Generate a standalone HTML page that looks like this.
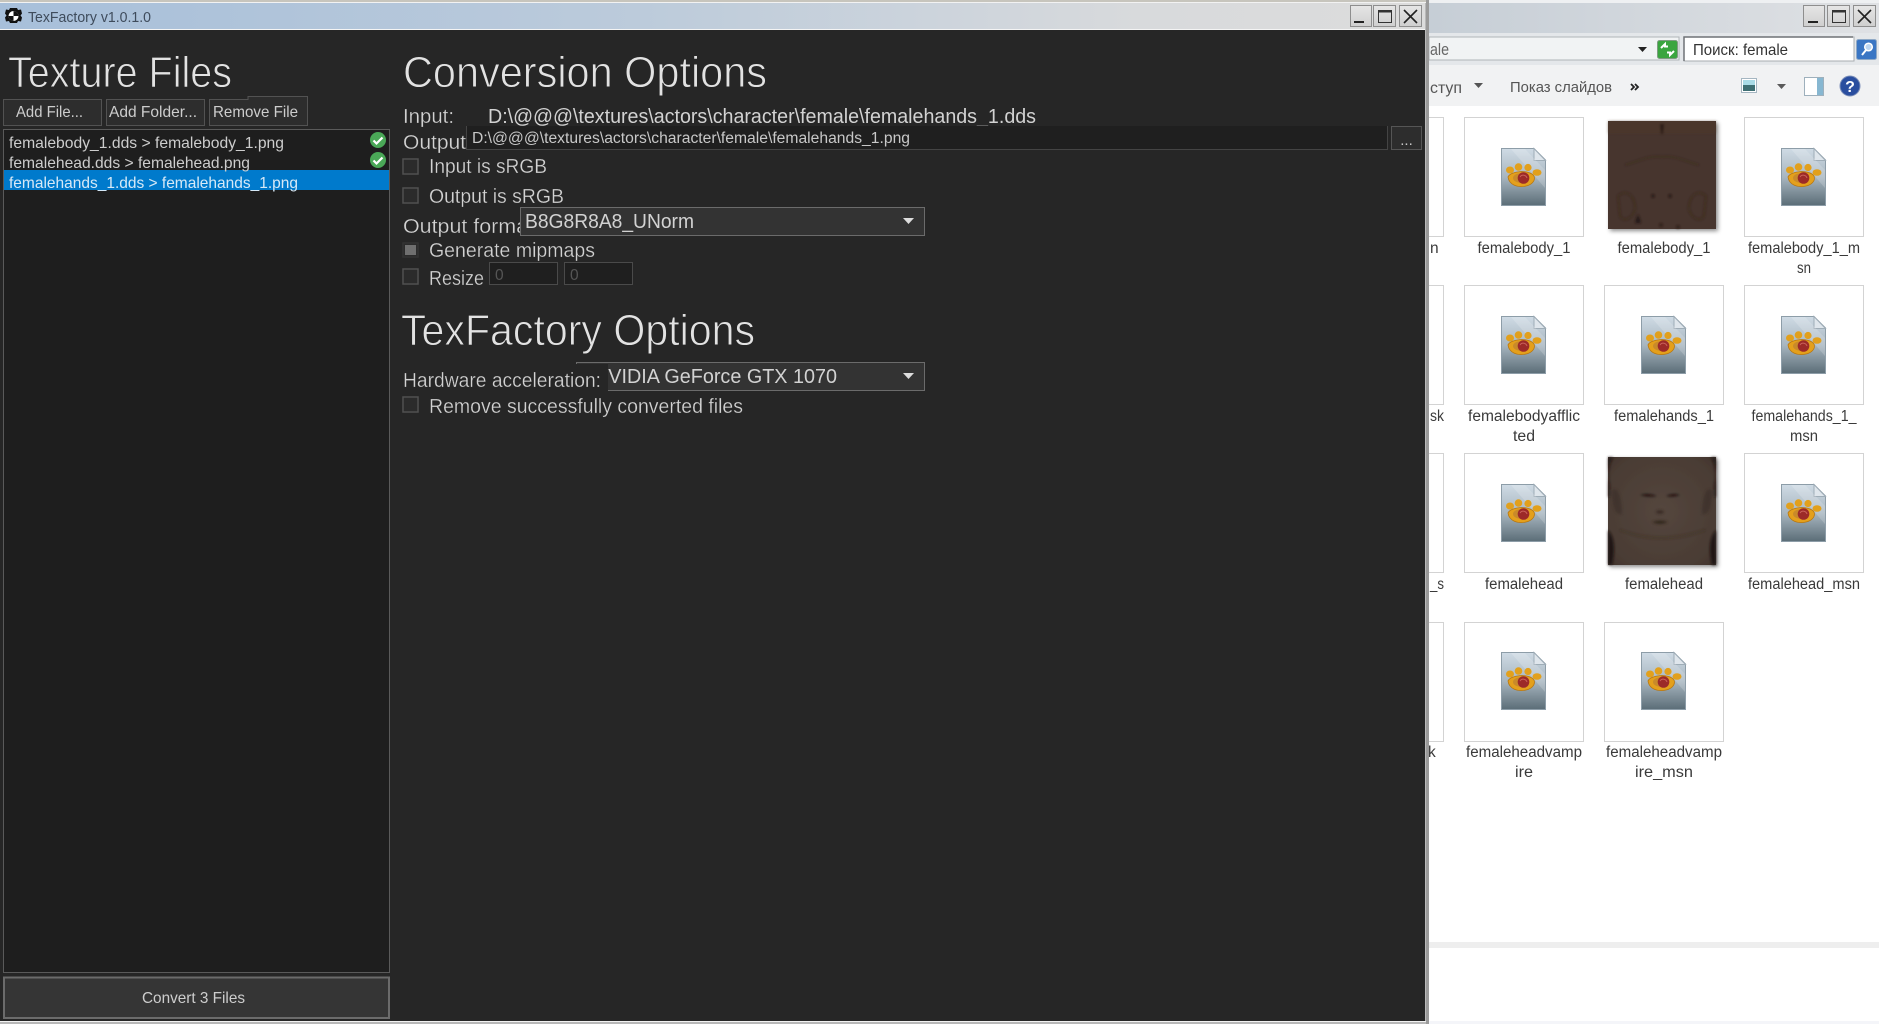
<!DOCTYPE html>
<html><head><meta charset="utf-8"><title>TexFactory</title>
<style>
html,body{margin:0;padding:0;background:#fff;overflow:hidden}
svg{display:block}
text{font-family:"Liberation Sans",sans-serif}
.h{fill:#e2e2e2;font-size:44px;stroke:#262626;stroke-width:.9px}
.m{fill:#d2d2d2;font-size:20px;stroke:#262626;stroke-width:.25px}
.s{fill:#cdcdcd;font-size:16px}
.l{fill:#3a3a3a;font-size:15.5px;text-anchor:middle}
.t{fill:none;stroke:#d3d3d3;stroke-width:1}
.cb{fill:#2b2b2b;stroke:#505050;stroke-width:1.5}
</style></head><body>
<svg xmlns="http://www.w3.org/2000/svg" width="1879" height="1024" viewBox="0 0 1879 1024">
<defs>
<linearGradient id="tb" x1="0" x2="1" y1="0" y2="0"><stop offset="0" stop-color="#a7bfda"/><stop offset=".45" stop-color="#bccbdb"/><stop offset=".8" stop-color="#d8dadc"/><stop offset="1" stop-color="#dcdcdc"/></linearGradient>
<linearGradient id="et" x1="0" x2="1" y1="0" y2="0"><stop offset="0" stop-color="#c6ced6"/><stop offset="1" stop-color="#dfe1e4"/></linearGradient>
<linearGradient id="doc" x1="0" x2="0" y1="0" y2="1"><stop offset="0" stop-color="#cfdbe5"/><stop offset=".5" stop-color="#a8b6c0"/><stop offset="1" stop-color="#5b6d77"/></linearGradient>
<linearGradient id="btn" x1="0" x2="0" y1="0" y2="1"><stop offset="0" stop-color="#e6e6e6"/><stop offset="1" stop-color="#cfcfcf"/></linearGradient>
<radialGradient id="face" cx=".5" cy=".5" r=".75"><stop offset="0" stop-color="#54463d"/><stop offset=".75" stop-color="#4a3c34"/><stop offset="1" stop-color="#3d3029"/></radialGradient>
<filter id="b1" x="-20%" y="-20%" width="140%" height="140%"><feGaussianBlur stdDeviation="1.2"/></filter>
<filter id="sh" x="-10%" y="-10%" width="125%" height="125%"><feDropShadow dx="2" dy="2" stdDeviation="2" flood-color="#000" flood-opacity=".45"/></filter>
<symbol id="fi" viewBox="0 0 45 58" overflow="visible">
<path d="M0.5 0.5H33L44.5 12V57.5H0.5Z" fill="url(#doc)" stroke="#8d9da8"/>
<path d="M33 .5V12.5H44.5Z" fill="#dfe6ec" stroke="#9fadb7"/>
<path d="M10 1L44 40V22L24 1Z" fill="#fff" opacity=".18"/>
<ellipse cx="9" cy="22" rx="4" ry="3.500" fill="#e2a01c"/>
<circle cx="17.500" cy="19" r="3.800" fill="#e2a01c"/>
<circle cx="27" cy="19.500" r="3.600" fill="#e2a01c"/>
<ellipse cx="36" cy="24.500" rx="4.500" ry="3.300" fill="#e2a01c"/>
<path d="M7 29C9 23 28 21 33 28C35 33 30 37 25 38C17 40 8 37 7 29Z" fill="#e4a01c" stroke="#b9770f" stroke-width=".8"/>
<ellipse cx="20" cy="30" rx="8" ry="4.800" fill="#c98a2a"/>
<circle cx="22.500" cy="30" r="5.800" fill="#9c2a28"/>
<path d="M19 29c2-3 6-2 7 1" fill="none" stroke="#c9605a" stroke-width="1"/>
</symbol>
</defs>

<!-- explorer window behind -->
<rect x="1425" y="0" width="454" height="1024" fill="#fff"/>
<rect x="1429" y="0" width="450" height="3" fill="#eef0f2"/>
<rect x="1429" y="3" width="450" height="30" fill="url(#et)"/>
<rect x="1429" y="33" width="450" height="32" fill="#e4e7ea"/>
<rect x="1429" y="37" width="250" height="23" fill="#f1f3f4" stroke="#b0b4b8"/>
<text x="1430" y="55" font-size="17" fill="#666" textLength="19" lengthAdjust="spacingAndGlyphs">ale</text>
<path d="M1638 47h9l-4.500 5z" fill="#222"/>
<rect x="1657.500" y="40.500" width="20" height="18" rx="2" fill="#3aa53f" stroke="#7f9c82"/>
<path d="M1661 48l4-4v2.500h3M1674 51l-4 4v-2.500h-3" stroke="#fff" stroke-width="2" fill="none"/>
<rect x="1684" y="37" width="170" height="24" fill="#fff" stroke="#a8acb0"/>
<path d="M1684 61V37H1853" fill="none" stroke="#6e7276" stroke-width="1.500"/>
<text x="1693" y="55" font-size="16" fill="#333" textLength="95" lengthAdjust="spacingAndGlyphs">Поиск: female</text>
<rect x="1856.500" y="39.500" width="20" height="20" rx="2" fill="#3a76c4" stroke="#8fa9c6"/>
<circle cx="1868.500" cy="47" r="3.800" fill="#bcd6f2" stroke="#fff" stroke-width="1.500"/>
<path d="M1866 50l-4 5" stroke="#fff" stroke-width="2"/>
<rect x="1429" y="65" width="450" height="41" fill="#f1f2f3"/>
<text x="1430" y="93" font-size="15.500" fill="#555" textLength="32" lengthAdjust="spacingAndGlyphs">ступ</text>
<path d="M1474 83h9l-4.500 5z" fill="#555"/>
<text x="1510" y="92" font-size="15" fill="#555" textLength="102" lengthAdjust="spacingAndGlyphs">Показ слайдов</text>
<path d="M1631 90l3-3-3-3M1635 90l3-3-3-3" stroke="#222" stroke-width="1.800" fill="none"/>
<rect x="1741.500" y="78.500" width="15" height="14" fill="#fff" stroke="#a5b6c1"/>
<rect x="1743" y="80" width="12" height="5" fill="#a9dbe6"/>
<rect x="1743" y="85" width="12" height="6" fill="#3e6f73"/>
<path d="M1777 84h9l-4.500 5z" fill="#5a5a5a"/>
<rect x="1804.500" y="77.500" width="19" height="18" fill="#fff" stroke="#9eb0bc"/>
<rect x="1817" y="78" width="6" height="17" fill="#87b7d1"/>
<circle cx="1850" cy="86" r="10" fill="#2a4e9f" stroke="#7c8fb9"/>
<text x="1850" y="92" font-size="16" font-weight="bold" fill="#fff" text-anchor="middle">?</text>

<g id="tiles">
<rect class="t" x="1420.500" y="117.500" width="23" height="119"/>
<rect class="t" x="1420.500" y="285.500" width="23" height="119"/>
<rect class="t" x="1420.500" y="453.500" width="23" height="119"/>
<rect class="t" x="1420.500" y="622.500" width="23" height="119"/>
<text x="1430" y="253" font-size="15.500" fill="#3a3a3a">n</text>
<text x="1430" y="421" font-size="15.500" fill="#3a3a3a" textLength="14" lengthAdjust="spacingAndGlyphs">sk</text>
<text x="1430" y="589" font-size="15.500" fill="#3a3a3a" textLength="14" lengthAdjust="spacingAndGlyphs">_s</text>
<text x="1428" y="757" font-size="15.500" fill="#3a3a3a">k</text>

<!-- row 1 -->
<rect class="t" x="1464.500" y="117.500" width="119" height="119"/>
<use href="#fi" x="1501" y="148" width="45" height="58"/>
<text class="l" x="1524" y="253" textLength="93" lengthAdjust="spacingAndGlyphs">femalebody_1</text>
<rect x="1608" y="121" width="108" height="108" fill="#47352d" filter="url(#sh)"/>
<g filter="url(#b1)">
<rect x="1608" y="121" width="108" height="12" fill="#4e3529" opacity=".4"/>
<path d="M1660 124h4l-1 10h-2z" fill="#2a1c16"/>
<path d="M1625 165c15-4 24-10 37-8 13-2 22 4 37 8" stroke="#33241d" stroke-width="1.500" fill="none" opacity=".4"/>
<path d="M1618 196c8-8 18 0 17 14-4 10-12 12-15 6z" fill="none" stroke="#2f221c" stroke-width="1.500" opacity=".5"/>
<path d="M1706 196c-8-8-18 0-17 14 4 10 12 12 15 6z" fill="none" stroke="#2f221c" stroke-width="1.500" opacity=".5"/>
<circle cx="1653" cy="196" r="1.500" fill="#1d1310"/><circle cx="1670" cy="196" r="1.500" fill="#1d1310"/>
<path d="M1638 214l3 9h-6z" fill="#241812"/>
<circle cx="1661" cy="225" r="1.500" fill="#241812"/><circle cx="1678" cy="227" r="1.500" fill="#241812"/>
</g>
<rect class="t" x="1744.500" y="117.500" width="119" height="119"/>
<use href="#fi" x="1781" y="148" width="45" height="58"/>
<text class="l" x="1804" y="253" textLength="112" lengthAdjust="spacingAndGlyphs">femalebody_1_m</text>
<text class="l" x="1804" y="273" textLength="14" lengthAdjust="spacingAndGlyphs">sn</text>
<text class="l" x="1664" y="253" textLength="93" lengthAdjust="spacingAndGlyphs">femalebody_1</text>

<!-- row 2 -->
<rect class="t" x="1464.500" y="285.500" width="119" height="119"/>
<use href="#fi" x="1501" y="316" width="45" height="58"/>
<text class="l" x="1524" y="421" textLength="112" lengthAdjust="spacingAndGlyphs">femalebodyafflic</text>
<text class="l" x="1524" y="441" textLength="22" lengthAdjust="spacingAndGlyphs">ted</text>
<rect class="t" x="1604.500" y="285.500" width="119" height="119"/>
<use href="#fi" x="1641" y="316" width="45" height="58"/>
<text class="l" x="1664" y="421" textLength="100" lengthAdjust="spacingAndGlyphs">femalehands_1</text>
<rect class="t" x="1744.500" y="285.500" width="119" height="119"/>
<use href="#fi" x="1781" y="316" width="45" height="58"/>
<text class="l" x="1804" y="421" textLength="105" lengthAdjust="spacingAndGlyphs">femalehands_1_</text>
<text class="l" x="1804" y="441" textLength="28" lengthAdjust="spacingAndGlyphs">msn</text>

<!-- row 3 -->
<rect class="t" x="1464.500" y="453.500" width="119" height="119"/>
<use href="#fi" x="1501" y="484" width="45" height="58"/>
<text class="l" x="1524" y="589" textLength="78" lengthAdjust="spacingAndGlyphs">femalehead</text>
<rect x="1608" y="457" width="108" height="108" fill="url(#face)" filter="url(#sh)"/>
<g filter="url(#b1)">
<path d="M1608 457h5c-5 10-5 20-3 28v12h-2z" fill="#1f1612" opacity=".7"/>
<path d="M1716 457h-5c5 10 5 20 3 28v12h2z" fill="#1f1612" opacity=".7"/>
<path d="M1608 530c6 6 8 18 4 35h-4z" fill="#1a120e" opacity=".85"/>
<path d="M1716 530c-6 6-8 18-4 35h4z" fill="#1a120e" opacity=".85"/>
<path d="M1612 490c6-4 10 8 10 24-6 2-10-6-10-24z" fill="#3a2d26" opacity=".7"/>
<path d="M1712 490c-6-4-10 8-10 24 6 2 10-6 10-24z" fill="#3a2d26" opacity=".7"/>
<path d="M1640 495q8-2 17 1q-9 1-17-1z" fill="#120c0a"/>
<path d="M1680 495q-7-2-14 1q7 1 14-1z" fill="#120c0a"/>
<ellipse cx="1660" cy="512" rx="4" ry="2" fill="#33261f" opacity=".8"/>
<path d="M1652 522q8-3 16 0q-8 4-16 0z" fill="#33251e"/>
<path d="M1620 530q40 16 85 0" stroke="#33261f" stroke-width="2" fill="none" opacity=".35"/>
</g>
<text class="l" x="1664" y="589" textLength="78" lengthAdjust="spacingAndGlyphs">femalehead</text>
<rect class="t" x="1744.500" y="453.500" width="119" height="119"/>
<use href="#fi" x="1781" y="484" width="45" height="58"/>
<text class="l" x="1804" y="589" textLength="112" lengthAdjust="spacingAndGlyphs">femalehead_msn</text>

<!-- row 4 -->
<rect class="t" x="1464.500" y="622.500" width="119" height="119"/>
<use href="#fi" x="1501" y="652" width="45" height="58"/>
<text class="l" x="1524" y="757" textLength="116" lengthAdjust="spacingAndGlyphs">femaleheadvamp</text>
<text class="l" x="1524" y="777" textLength="18" lengthAdjust="spacingAndGlyphs">ire</text>
<rect class="t" x="1604.500" y="622.500" width="119" height="119"/>
<use href="#fi" x="1641" y="652" width="45" height="58"/>
<text class="l" x="1664" y="757" textLength="116" lengthAdjust="spacingAndGlyphs">femaleheadvamp</text>
<text class="l" x="1664" y="777" textLength="58" lengthAdjust="spacingAndGlyphs">ire_msn</text>
</g>

<rect x="1429" y="942" width="450" height="6" fill="#eeeeee"/>
<rect x="1429" y="1021" width="450" height="3" fill="#f4f5f9"/>

<!-- explorer caption buttons -->
<g stroke="#8e8e8e" fill="url(#btn)">
<rect x="1803.500" y="5.500" width="21" height="21"/>
<rect x="1827.500" y="5.500" width="22" height="21"/>
<rect x="1853.500" y="5.500" width="22" height="21"/>
</g>
<path d="M1808 22h10" stroke="#222" stroke-width="2"/>
<rect x="1832.500" y="10.500" width="13" height="12" fill="none" stroke="#333"/><path d="M1832 11.500h14" stroke="#333" stroke-width="2"/>
<path d="M1858 10l13 13M1871 10l-13 13" stroke="#222" stroke-width="1.600"/>

<!-- main window -->
<rect x="0" y="0" width="1429" height="1024" fill="#b9b9b9"/>
<rect x="0" y="0" width="1426" height="2" fill="#c7c5bd"/>
<rect x="0" y="2" width="1426" height="1" fill="#f2f2f2"/>
<rect x="1426" y="0" width="3" height="1024" fill="#9a9a9a"/>
<rect x="0" y="3" width="1425" height="26" fill="url(#tb)"/>
<rect x="0" y="29" width="1425" height="1" fill="#f4f4f4"/>
<rect x="0" y="30" width="1425" height="991" fill="#262626"/>
<rect x="0" y="1021" width="1426" height="1" fill="#f2f2f2"/>
<rect x="0" y="1022" width="1426" height="2" fill="#b8b8b8"/>

<!-- app icon -->
<path d="M10 8h7l1 2 3-.500 1 4-1.500 2 1.500 2-1 4-3-.500-1 2h-7l-1-2-3 .500-1-4 1.500-2-1.500-2 1-4 3 .500z" fill="#111"/>
<circle cx="13.500" cy="16" r="5" fill="#fff"/>
<path d="M13.500 11a5 5 0 0 1 5 5h-5zM13.500 21a5 5 0 0 1-5-5h5z" fill="#111"/>
<text x="28" y="22" font-size="14.500" fill="#3f4c5c" textLength="123" lengthAdjust="spacingAndGlyphs">TexFactory v1.0.1.0</text>

<!-- caption buttons -->
<g stroke="#8e8e8e" fill="url(#btn)">
<rect x="1350.500" y="5.500" width="21" height="21"/>
<rect x="1373.500" y="5.500" width="22" height="21"/>
<rect x="1399.500" y="5.500" width="22" height="21"/>
</g>
<path d="M1354 22h10" stroke="#222" stroke-width="2"/>
<rect x="1378.500" y="10.500" width="13" height="12" fill="none" stroke="#333"/><path d="M1378 11.500h14" stroke="#333" stroke-width="2"/>
<path d="M1404 10l13 13M1417 10l-13 13" stroke="#222" stroke-width="1.600"/>

<!-- left column -->
<text class="h" x="8" y="87" textLength="224" lengthAdjust="spacingAndGlyphs">Texture Files</text>
<g fill="#2d2d2d" stroke="#525252">
<rect x="3.500" y="99.500" width="98" height="26"/>
<rect x="106.500" y="99.500" width="98" height="26"/>
<path d="M209.500 125.500V99.500H248V96.500H307.500V125.500Z"/>
</g>
<text class="s" x="16" y="117" textLength="67" lengthAdjust="spacingAndGlyphs">Add File...</text>
<text class="s" x="109" y="117" textLength="88" lengthAdjust="spacingAndGlyphs">Add Folder...</text>
<text class="s" x="213" y="117" textLength="85" lengthAdjust="spacingAndGlyphs">Remove File</text>

<rect x="3.500" y="129.500" width="386" height="843" fill="#1e1e1e" stroke="#5a5a5a"/>
<rect x="4" y="170" width="385" height="20" fill="#007acc"/>
<text class="s" x="9" y="148" textLength="275" lengthAdjust="spacingAndGlyphs">femalebody_1.dds &gt; femalebody_1.png</text>
<text class="s" x="9" y="168" textLength="241" lengthAdjust="spacingAndGlyphs">femalehead.dds &gt; femalehead.png</text>
<text x="9" y="188" font-size="16" fill="#d6e9f7" textLength="289" lengthAdjust="spacingAndGlyphs">femalehands_1.dds &gt; femalehands_1.png</text>
<circle cx="378" cy="140" r="8" fill="#4aa857"/><path d="M373.500 140.500l3 3 6-6" stroke="#fff" stroke-width="2.200" fill="none"/>
<circle cx="378" cy="160" r="8" fill="#4aa857"/><path d="M373.500 160.500l3 3 6-6" stroke="#fff" stroke-width="2.200" fill="none"/>

<rect x="4" y="977.500" width="385" height="40.500" fill="#353535" stroke="#6b6b6b" stroke-width="2"/>
<text class="s" x="142" y="1003" textLength="103" lengthAdjust="spacingAndGlyphs">Convert 3 Files</text>

<!-- right column -->
<text class="h" x="403" y="87" textLength="364" lengthAdjust="spacingAndGlyphs">Conversion Options</text>
<text class="m" x="403" y="123" textLength="51" lengthAdjust="spacingAndGlyphs">Input:</text>
<text x="488" y="123" font-size="20" fill="#d2d2d2" textLength="548" lengthAdjust="spacingAndGlyphs">D:\@@@\textures\actors\character\female\femalehands_1.dds</text>
<text class="m" x="403" y="149" textLength="63" lengthAdjust="spacingAndGlyphs">Output</text>
<rect x="466.500" y="126" width="921" height="23" fill="#1f1f1f"/>
<path d="M466.500 126V149.500H1387.500V126" fill="none" stroke="#444"/>
<text x="472" y="143" font-size="15.500" fill="#c8c8c8" textLength="438" lengthAdjust="spacingAndGlyphs">D:\@@@\textures\actors\character\female\femalehands_1.png</text>
<rect x="1391.500" y="126.500" width="30" height="23" fill="#2d2d2d" stroke="#555"/>
<text x="1406.500" y="145" font-size="15" fill="#c8c8c8" text-anchor="middle">...</text>

<rect class="cb" x="403" y="159" width="15" height="15"/>
<text class="m" x="429" y="173" textLength="118" lengthAdjust="spacingAndGlyphs">Input is sRGB</text>
<rect class="cb" x="403" y="188" width="15" height="15"/>
<text class="m" x="429" y="203" textLength="135" lengthAdjust="spacingAndGlyphs">Output is sRGB</text>
<text class="m" x="403" y="233" textLength="137" lengthAdjust="spacingAndGlyphs">Output format:</text>
<rect x="520.500" y="207.500" width="404" height="28" fill="#333" stroke="#6b6b6b"/>
<text x="525" y="228" font-size="20" fill="#d2d2d2" textLength="169" lengthAdjust="spacingAndGlyphs">B8G8R8A8_UNorm</text>
<path d="M903 218h11l-5.500 6z" fill="#ddd"/>

<rect x="403" y="243" width="15" height="14" fill="#2b2b2b" stroke="#333" stroke-width="1.500"/>
<rect x="405" y="245" width="11" height="10" fill="#6f6f6f"/>
<text class="m" x="429" y="257" textLength="166" lengthAdjust="spacingAndGlyphs">Generate mipmaps</text>
<rect class="cb" x="403" y="269" width="15" height="15"/>
<text class="m" x="429" y="285" textLength="55" lengthAdjust="spacingAndGlyphs">Resize</text>
<rect x="489.500" y="262.500" width="68" height="22" fill="#1f1f1f" stroke="#4a4a4a"/>
<rect x="564.500" y="262.500" width="68" height="22" fill="#1f1f1f" stroke="#4a4a4a"/>
<text x="495" y="280" font-size="15.500" fill="#555">0</text>
<text x="570" y="280" font-size="15.500" fill="#555">0</text>

<text class="h" x="401" y="345" textLength="354" lengthAdjust="spacingAndGlyphs">TexFactory Options</text>
<rect x="576.500" y="362.500" width="348" height="28" fill="#333" stroke="#6b6b6b"/>
<text x="594" y="383" font-size="20" fill="#d2d2d2" textLength="243" lengthAdjust="spacingAndGlyphs">NVIDIA GeForce GTX 1070</text>
<rect x="576" y="364" width="32" height="28" fill="#262626"/>
<text class="m" x="403" y="387" textLength="198" lengthAdjust="spacingAndGlyphs">Hardware acceleration:</text>
<path d="M903 373h11l-5.500 6z" fill="#ddd"/>
<rect class="cb" x="403" y="397" width="15" height="15"/>
<text class="m" x="429" y="413" textLength="314" lengthAdjust="spacingAndGlyphs">Remove successfully converted files</text>
</svg>
</body></html>
